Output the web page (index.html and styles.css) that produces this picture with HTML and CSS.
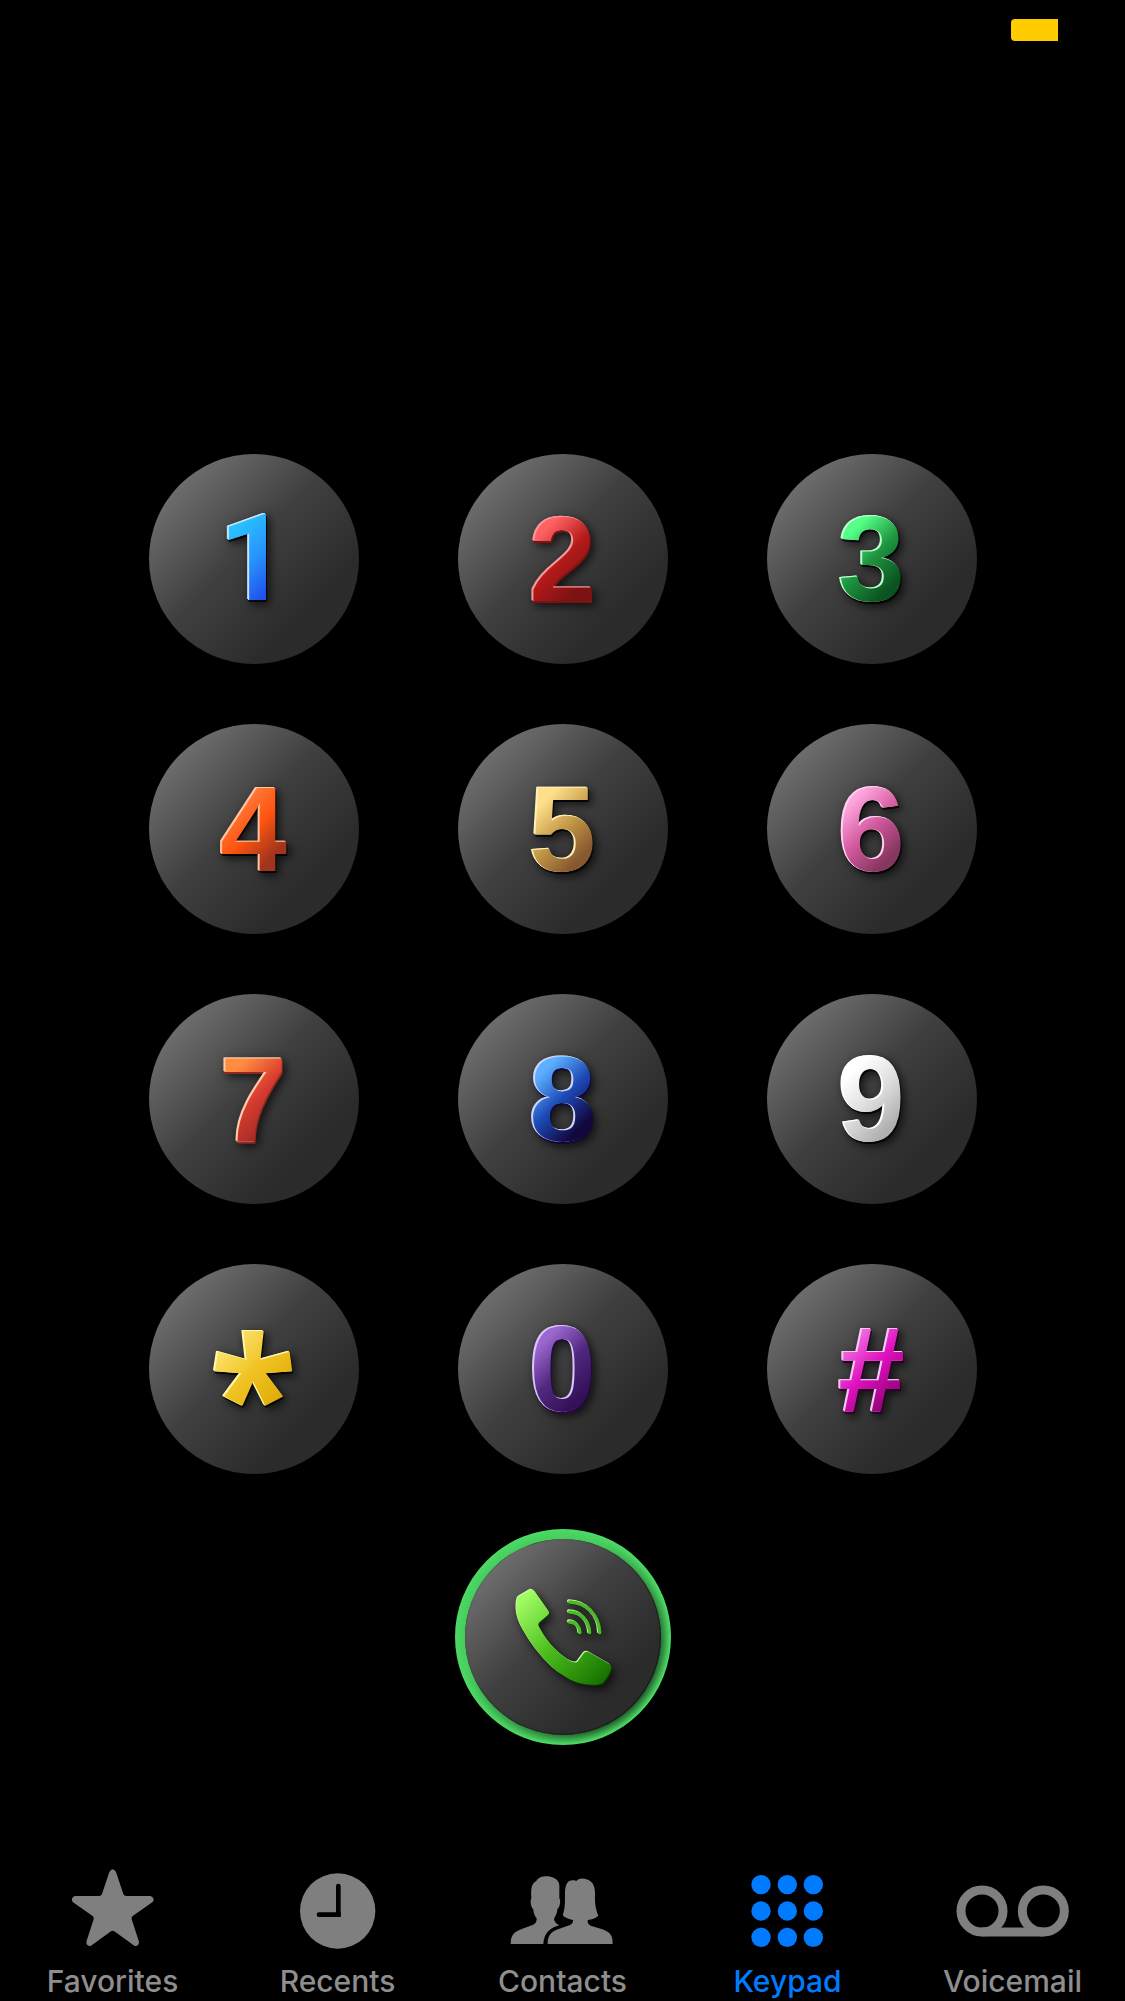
FILE: index.html
```html
<!DOCTYPE html>
<html lang="en">
<head>
    <meta charset="UTF-8">
    <meta name="viewport" content="width=device-width, initial-scale=1.0">
    <title>Keypad</title>
    <link rel="stylesheet" href="styles.css">
</head>
<body>
    <header class="status-bar">
        <div class="battery"></div>
    </header>

    <main class="dialer">
        <div class="keypad">
            <button class="key"><span class="digit blue one">1</span></button>
            <button class="key"><span class="digit red">2</span></button>
            <button class="key"><span class="digit green">3</span></button>
            <button class="key"><span class="digit orange">4</span></button>
            <button class="key"><span class="digit gold">5</span></button>
            <button class="key"><span class="digit pink">6</span></button>
            <button class="key"><span class="digit coral">7</span></button>
            <button class="key"><span class="digit navy">8</span></button>
            <button class="key"><span class="digit silver">9</span></button>
            <button class="key"><span class="digit yellow asterisk">*</span></button>
            <button class="key"><span class="digit purple">0</span></button>
            <button class="key"><span class="digit magenta">#</span></button>
        </div>

        <button class="call" aria-label="Call">
            <svg class="call-icon" viewBox="219 231 300 300">
                <defs>
                    <linearGradient id="phone" gradientUnits="userSpaceOnUse" x1="240" y1="250" x2="500" y2="510">
                        <stop offset="0.05" stop-color="#a0fc62"/>
                        <stop offset="0.5" stop-color="#4bbd1c"/>
                        <stop offset="1" stop-color="#157000"/>
                    </linearGradient>
                </defs>
                <path fill="url(#phone)" d="M272 239Q280 238 285 245L326 304Q329 310 324 315L299 336Q293 342 296 349C315 385 345 425 385 450Q402 460 412 456L432 429Q440 422 450 428L508 462Q516 468 513 477C510 490 500 505 490 517Q485 523 470 524C430 527 400 517 365 493C320 465 270 400 242 345C228 315 228 290 231 272Q232 262 240 258Z"/>
                <path fill="none" stroke="#4bb828" stroke-width="10" stroke-linecap="round" d="M389 336C408 337 419 350 420 368M389 306C425 307 448 335 449 368M389 276C440 277 478 318 479 368"/>
            </svg>
        </button>
    </main>

    <nav class="tabs">
        <a class="tab" href="#favorites">
            <svg class="tab-icon" viewBox="82 54 330 246">
                <path d="M236 66Q246 50 256 66L278 132Q280 138 287 138H360Q374 146 366 156L305 199Q302 203 303 208L325 275Q325 289 312 288L251 244Q246 241 241 244L180 288Q167 289 167 275L189 208Q190 203 187 199L126 156Q119 144 132 138H205Q212 138 214 132Z"/>
            </svg>
            <span>Favorites</span>
        </a>
        <a class="tab" href="#recents">
            <svg class="tab-icon" viewBox="757 54 330 246">
                <circle cx="921" cy="183" r="113"/>
                <path fill="none" stroke="#000" stroke-width="14" stroke-linecap="round" d="M923 108V194H865"/>
                <path fill="#000" d="M916 187H930V201H916Z"/>
            </svg>
            <span>Recents</span>
        </a>
        <a class="tab" href="#contacts">
            <svg class="tab-icon" viewBox="112 54 330 246">
                <path d="M120 282C120 255 130 245 155 236L188 224Q199 219 198 205C190 196 188 185 188 178C180 172 178 152 182 145C180 115 183 100 197 93C206 76 235 76 250 84C267 92 267 105 266 120V145C271 152 268 172 260 178C260 188 255 198 250 206Q250 217 266 226C240 232 219 250 218 282Z"/>
                <path d="M231 282C231 258 240 245 262 238L298 225Q308 220 307 210Q288 207 276 196C286 170 282 140 283 125C285 100 292 90 308 91Q314 91 317 93C325 82 345 84 355 91C370 100 373 115 373 130C372 165 376 180 383 197Q370 208 351 210V216Q352 224 360 227L395 238C420 247 426 258 426 282Z"/>
            </svg>
            <span>Contacts</span>
        </a>
        <a class="tab active" href="#keypad">
            <svg class="tab-icon" viewBox="787 54 330 246">
                <circle cx="871" cy="104" r="29"/>
                <circle cx="950" cy="104" r="29"/>
                <circle cx="1028" cy="104" r="29"/>
                <circle cx="871" cy="183" r="29"/>
                <circle cx="950" cy="183" r="29"/>
                <circle cx="1028" cy="183" r="29"/>
                <circle cx="871" cy="262" r="29"/>
                <circle cx="950" cy="262" r="29"/>
                <circle cx="1028" cy="262" r="29"/>
            </svg>
            <span>Keypad</span>
        </a>
        <a class="tab" href="#voicemail">
            <svg class="tab-icon" viewBox="172 54 330 246">
                <g fill="none" stroke="currentColor" stroke-width="27">
                    <circle cx="244" cy="183" r="63"/>
                    <circle cx="428" cy="183" r="63"/>
                    <path d="M244 246H428"/>
                </g>
            </svg>
            <span>Voicemail</span>
        </a>
    </nav>
</body>
</html>
```
FILE: styles.css
```css
* {
    box-sizing: border-box;
}
body {
    margin: 0;
    min-height: 100vh;
    display: flex;
    flex-direction: column;
    background-color: #000;
    font-family: Inter, "Liberation Sans", sans-serif;
}
.status-bar {
    display: flex;
    justify-content: flex-end;
    padding: 19px 67px;
}
.battery {
    width: 47px;
    height: 22px;
    background-color: #fc0;
    border-radius: 4px 0 0 4px;
}
.dialer {
    display: flex;
    flex-direction: column;
    align-items: center;
    gap: 55px;
    padding-top: 394px;
}
.keypad {
    display: grid;
    grid-template-columns: repeat(3, 210px);
    gap: 60px 99px;
}
.key, .call {
    display: flex;
    justify-content: center;
    align-items: center;
    padding: 0;
    border: none;
    border-radius: 50%;
    background: linear-gradient(135deg, #828282 0%, #404040 45%, #2b2b2b 75%);
    cursor: pointer;
}
.key {
    height: 210px;
}

/* gradient digits with a lit edge top left and a shadow bottom right */
.digit {
    font-family: "Liberation Sans", Arial, sans-serif;
    font-size: 120px;
    font-weight: bold;
    line-height: 120px;
    color: transparent;
    background-image: linear-gradient(135deg, var(--from) 25%, var(--mid) 50%, var(--to) 75%);
    -webkit-background-clip: text;
    background-clip: text;
    filter: drop-shadow(-1px -1px 0 var(--edge)) drop-shadow(-1px 0 0 var(--edge)) drop-shadow(1px 2px 0 var(--side)) drop-shadow(3px 3px 5px rgba(0,0,0,0.7));
    --side: rgba(0,0,0,0.8);
}
.one {
    font-family: Roboto, sans-serif;
}
.asterisk {
    font-family: "Open Sans", sans-serif;
    font-size: 160px;
    line-height: 160px;
    padding-top: 44px;
}
.blue { --from: #28c0ff; --mid: #2894fa; --to: #2052ee; --edge: #c4e4ff; }
.red { --from: #ff6262; --mid: #b51a1a; --to: #7c1212; --edge: #f59a9a; --side: #7c1212; }
.green { --from: #55ff88; --mid: #1f9440; --to: #0b5420; --edge: #bcffd0; }
.orange { --from: #ff8040; --mid: #ff5510; --to: #a0341c; --edge: #ffc4a0; }
.gold { --from: #ffe08a; --mid: #c69a48; --to: #87592f; --edge: #fff0b8; }
.pink { --from: #ffa6dc; --mid: #d2589e; --to: #85375f; --edge: #ffd0f0; }
.coral { --from: #ff8c40; --mid: #d93c30; --to: #a02a24; --edge: #ffccaa; --side: #8e2a20; }
.navy { --from: #5cb0ff; --mid: #1c48b4; --to: #12083c; --edge: #ccd4ff; --side: #12083c; }
.silver { --from: #ffffff; --mid: #dedede; --to: #b0b0b0; --edge: #ffffff; }
.yellow { --from: #ffee88; --mid: #f0c424; --to: #dca400; --edge: #fffaa8; }
.purple { --from: #9c68d0; --mid: #512880; --to: #341058; --edge: #dcc4fa; --side: #240a40; }
.magenta { --from: #f068e0; --mid: #de10be; --to: #98047e; --edge: #f8c8f8; --side: #280024; }

.call {
    width: 216px;
    height: 216px;
    border: 10px solid #4cd964;
    background-clip: padding-box;
    position: relative;
}
/* shade over the lower right of the ring */
.call::before {
    content: "";
    position: absolute;
    inset: -10px;
    border-radius: 50%;
    background: radial-gradient(circle, transparent 96px, rgba(0,0,0,0.6) 98px, transparent 107px);
    -webkit-mask-image: linear-gradient(135deg, rgba(0,0,0,0.1) 35%, #000 85%);
    mask-image: linear-gradient(135deg, rgba(0,0,0,0.1) 35%, #000 85%);
}
.call-icon {
    width: 100px;
    height: 100px;
    overflow: visible;
    filter: drop-shadow(-1px -1px 0 #c8f8a0) drop-shadow(1px 1px 0 #0c3804) drop-shadow(3px 4px 5px rgba(0,0,0,0.7));
}

.tabs {
    display: flex;
    margin-top: auto;
}
.tab {
    flex: 1;
    display: flex;
    flex-direction: column;
    align-items: center;
    color: #7f7f7f;
    font-size: 30px;
    font-weight: 500;
    line-height: 34px;
    text-decoration: none;
    padding-bottom: 3px;
}
.tab span {
    color: #8e8e8e;
    margin-top: 14px;
}
.tab.active, .tab.active span {
    color: #007aff;
}
.tab-icon {
    width: 110px;
    height: 82px;
    overflow: visible;
    fill: currentColor;
}
```
